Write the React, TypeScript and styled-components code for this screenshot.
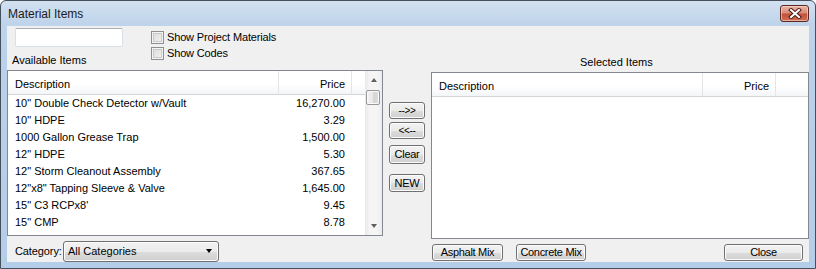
import React from "react";
import styled, { createGlobalStyle } from "styled-components";

const Global = createGlobalStyle`
  html, body { margin: 0; padding: 0; background: #ffffff; }
  body { font-family: "Liberation Sans", Arial, sans-serif; font-size: 11px; color: #000; }
  * { box-sizing: border-box; }
`;

const Window = styled.div`
  width: 816px;
  height: 269px;
  border: 1px solid #44505c;
  border-radius: 6px 6px 0 0;
  background: linear-gradient(#d3e1f1 0px, #bfd4eb 22px, #b9d1ea 60px, #b4cde8 100%);
  padding: 0 6px 6px 6px;
  display: flex;
  flex-direction: column;
`;

const TitleBar = styled.div`
  height: 25px;
  display: flex;
  align-items: flex-start;
  justify-content: space-between;
`;

const Title = styled.div`
  font-size: 12px;
  line-height: 14px;
  margin-top: 6px;
  padding-left: 1px;
  color: #1b1b1b;
`;

const CloseBox = styled.div`
  width: 29px;
  height: 17px;
  margin-top: 4px;
  border: 1px solid #5a2a22;
  border-radius: 3px;
  background: linear-gradient(#eab3a4 0%, #d98d7a 45%, #c4513a 55%, #d06f55 100%);
  box-shadow: inset 0 0 0 1px rgba(255, 220, 210, 0.6);
  display: flex;
  align-items: center;
  justify-content: center;
`;

const Client = styled.div`
  height: 236px;
  background: #f0f0f0;
  display: grid;
  grid-template-columns: 376px 36px 378px;
  column-gap: 6px;
`;

const Column = styled.div`
  display: flex;
  flex-direction: column;
  min-width: 0;
`;

const TopRow = styled.div`
  height: 44px;
  display: flex;
`;

const SearchBlock = styled.div`
  display: flex;
  flex-direction: column;
  padding-left: 5px;
`;

const TextBox = styled.div`
  width: 108px;
  height: 19px;
  margin-top: 2px;
  margin-left: 3px;
  background: #fff;
  border: 1px solid #d9dfe6;
  border-top-color: #abadb3;
  border-radius: 2px;
`;

const Label = styled.div<{ $top?: number; $left?: number }>`
  line-height: 13px;
  white-space: nowrap;
  margin-top: ${(p) => p.$top ?? 0}px;
  padding-left: ${(p) => p.$left ?? 0}px;
`;

const CheckGroup = styled.div`
  display: flex;
  flex-direction: column;
  margin-left: 28px;
  padding-top: 5px;
`;

const CheckRow = styled.div`
  height: 16px;
  display: flex;
  align-items: flex-start;
  gap: 3px;
  line-height: 13px;
  letter-spacing: -0.15px;
`;

const CheckBox = styled.div`
  width: 13px;
  height: 13px;
  border: 1px solid #8e8f8f;
  background: linear-gradient(135deg, #d8d8d8, #f6f6f6);
  box-shadow: inset 0 0 0 1px #f4f4f4, inset 0 0 0 2px #c9c9c9;
`;

const ListBox = styled.div<{ $h: number; $top?: number }>`
  height: ${(p) => p.$h}px;
  margin-top: ${(p) => p.$top ?? 0}px;
  border: 1px solid #828790;
  background: #fff;
  display: flex;
`;

const ListBody = styled.div`
  flex: 1;
  min-width: 0;
  display: flex;
  flex-direction: column;
`;

const Header = styled.div`
  height: 24px;
  display: grid;
  grid-template-columns: 271px 73px 1fr;
  background: linear-gradient(#ffffff 0%, #ffffff 55%, #f4f5f7 100%);
  border-bottom: 1px solid #d5d5d5;
`;

const HeadCell = styled.div<{ $right?: boolean; $last?: boolean }>`
  display: flex;
  align-items: center;
  justify-content: ${(p) => (p.$right ? "flex-end" : "flex-start")};
  padding: 0 ${(p) => (p.$right ? "6px" : "0")} 0 ${(p) => (p.$right ? "0" : "7px")};
  border-right: ${(p) => (p.$last ? "none" : "1px solid #e5e5e5")};
  line-height: 13px;
  padding-top: 3px;
`;

const Row = styled.div`
  height: 17px;
  display: grid;
  grid-template-columns: 271px 73px 1fr;
  align-items: center;
  line-height: 13px;
`;

const Cell = styled.div<{ $right?: boolean }>`
  text-align: ${(p) => (p.$right ? "right" : "left")};
  padding: 0 ${(p) => (p.$right ? "7px" : "0")} 0 ${(p) => (p.$right ? "0" : "7px")};
  white-space: nowrap;
  overflow: hidden;
`;

const ScrollBar = styled.div`
  width: 17px;
  display: flex;
  flex-direction: column;
  background: linear-gradient(90deg, #e9e9e9, #f5f5f5 30%, #f5f5f5 70%, #ececec);
`;

const ArrowBtn = styled.div<{ $down?: boolean }>`
  height: 18px;
  display: flex;
  align-items: center;
  justify-content: center;
  &::after {
    content: "";
    width: 0;
    height: 0;
    border-left: 3.5px solid transparent;
    border-right: 3.5px solid transparent;
    ${(p) =>
      p.$down
        ? "border-top: 4px solid #606060;"
        : "border-bottom: 4px solid #606060;"}
  }
`;

const Track = styled.div`
  flex: 1;
  padding: 1px 2px 0 1px;
`;

const Thumb = styled.div`
  height: 15px;
  border: 1px solid #979797;
  border-radius: 2px;
  background: linear-gradient(90deg, #f3f3f3, #e8e8e8 50%, #d6d6d6 51%, #dcdcdc);
  box-shadow: inset 0 0 0 1px #fafafa;
`;

const CategoryRow = styled.div`
  margin-top: 4px;
  display: flex;
  align-items: center;
  padding-left: 8px;
  height: 22px;
`;

const CatLabel = styled.div`
  width: 48px;
  white-space: nowrap;
  line-height: 13px;
  letter-spacing: -0.1px;
`;

const Combo = styled.div`
  width: 156px;
  height: 21px;
  border: 1px solid #707070;
  border-radius: 3px;
  background: linear-gradient(#f2f2f2 0%, #ebebeb 50%, #dddddd 51%, #cfcfcf 100%);
  box-shadow: inset 0 0 0 1px #fbfbfb;
  display: flex;
  align-items: center;
  justify-content: space-between;
  padding: 0 6px 0 4px;
  &::after {
    content: "";
    border-left: 3.5px solid transparent;
    border-right: 3.5px solid transparent;
    border-top: 4px solid #000;
  }
`;

const MiddleCol = styled.div`
  display: flex;
  flex-direction: column;
  padding-top: 76px;
`;

const Btn = styled.div<{ $w?: number; $h: number; $top?: number; $left?: number }>`
  width: ${(p) => (p.$w ? `${p.$w}px` : "100%")};
  height: ${(p) => p.$h}px;
  margin-top: ${(p) => p.$top ?? 0}px;
  margin-left: ${(p) => p.$left ?? 0}px;
  border: 1px solid #707070;
  border-radius: 3px;
  background: linear-gradient(#f2f2f2 0%, #ebebeb 50%, #dddddd 51%, #cfcfcf 100%);
  box-shadow: inset 0 0 0 1px #fcfcfc;
  display: flex;
  align-items: center;
  justify-content: center;
  line-height: 13px;
  white-space: nowrap;
  flex-shrink: 0;
  letter-spacing: -0.3px;
`;

const SmallBtnText = styled.span`
  font-size: 10px;
  letter-spacing: -0.3px;
`;

const BottomRow = styled.div`
  display: flex;
  margin-top: 5px;
`;

const items: [string, string][] = [
  ['10" Double Check Detector w/Vault', "16,270.00"],
  ['10" HDPE', "3.29"],
  ["1000 Gallon Grease Trap", "1,500.00"],
  ['12" HDPE', "5.30"],
  ['12" Storm Cleanout Assembly', "367.65"],
  ['12"x8" Tapping Sleeve & Valve', "1,645.00"],
  ['15" C3 RCPx8\'', "9.45"],
  ['15" CMP', "8.78"],
];

function HeaderRow() {
  return (
    <Header>
      <HeadCell>Description</HeadCell>
      <HeadCell $right>Price</HeadCell>
      <HeadCell $last />
    </Header>
  );
}

export default function App() {
  return (
    <>
      <Global />
      <Window>
        <TitleBar>
          <Title>Material Items</Title>
          <CloseBox>
            <svg width="14" height="11" viewBox="0 0 14 11">
              <path d="M3 2 L11 9 M11 2 L3 9" stroke="#4a1c14" strokeWidth="4" strokeLinecap="square" />
              <path d="M3 2 L11 9 M11 2 L3 9" stroke="#ffffff" strokeWidth="2" strokeLinecap="square" />
            </svg>
          </CloseBox>
        </TitleBar>
        <Client>
          <Column>
            <TopRow>
              <SearchBlock>
                <TextBox />
                <Label $top={7}>Available Items</Label>
              </SearchBlock>
              <CheckGroup>
                <CheckRow>
                  <CheckBox />
                  <span>Show Project Materials</span>
                </CheckRow>
                <CheckRow>
                  <CheckBox />
                  <span>Show Codes</span>
                </CheckRow>
              </CheckGroup>
            </TopRow>
            <ListBox $h={166}>
              <ListBody>
                <HeaderRow />
                {items.map(([d, p]) => (
                  <Row key={d}>
                    <Cell>{d}</Cell>
                    <Cell $right>{p}</Cell>
                    <Cell />
                  </Row>
                ))}
              </ListBody>
              <ScrollBar>
                <ArrowBtn />
                <Track>
                  <Thumb />
                </Track>
                <ArrowBtn $down />
              </ScrollBar>
            </ListBox>
            <CategoryRow>
              <CatLabel>Category:</CatLabel>
              <Combo>All Categories</Combo>
            </CategoryRow>
          </Column>

          <MiddleCol>
            <Btn $h={17}>
              <SmallBtnText>--&gt;&gt;</SmallBtnText>
            </Btn>
            <Btn $h={17} $top={3}>
              <SmallBtnText>&lt;&lt;--</SmallBtnText>
            </Btn>
            <Btn $h={19} $top={6}>Clear</Btn>
            <Btn $h={18} $top={10}>NEW</Btn>
          </MiddleCol>

          <Column>
            <Label $top={30} $left={149}>Selected Items</Label>
            <ListBox $h={167} $top={3}>
              <ListBody>
                <HeaderRow />
              </ListBody>
            </ListBox>
            <BottomRow>
              <Btn $w={71} $h={17} $left={1}>Asphalt Mix</Btn>
              <Btn $w={70} $h={17} $left={13}>Concrete Mix</Btn>
              <Btn $w={79} $h={17} $left={138}>Close</Btn>
            </BottomRow>
          </Column>
        </Client>
      </Window>
    </>
  );
}
